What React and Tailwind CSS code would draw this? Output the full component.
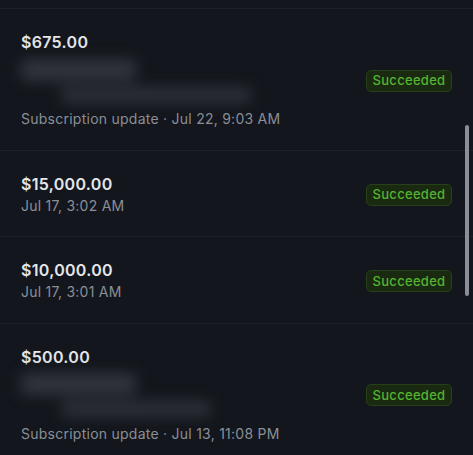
import React from 'react';

const payments = [
  {
    id: 1,
    amount: '$675.00',
    redacted: [115, 230],
    subtitle: 'Subscription update · Jul 22, 9:03 AM',
  },
  { id: 2, amount: '$15,000.00', subtitle: 'Jul 17, 3:02 AM' },
  { id: 3, amount: '$10,000.00', subtitle: 'Jul 17, 3:01 AM' },
  {
    id: 4,
    amount: '$500.00',
    redacted: [115, 190],
    subtitle: 'Subscription update · Jul 13, 11:08 PM',
  },
];

function Badge() {
  return (
    <span className="inline-flex h-[22px] w-[86px] items-center justify-center rounded-[5px] border border-[#27401a] bg-[#192a11] text-[13px] font-medium leading-none tracking-[0.3px] text-[#55b331]">
      Succeeded
    </span>
  );
}

function Redacted({ widths }) {
  // blurred customer details
  return (
    <div className="relative h-[55px]">
      <div className="absolute inset-0 flex flex-col justify-center gap-[6px] blur-[7px]">
        <div
          className="h-[22px] rounded bg-[#30343b]"
          style={{ width: widths[0] }}
        />
        <div
          className="ml-[40px] h-[16px] rounded bg-[#2c3037]"
          style={{ width: widths[1] - 40 }}
        />
      </div>
    </div>
  );
}

export default function App() {
  return (
    <div
      className="relative h-[455px] w-[473px] overflow-hidden bg-[#13161c]"
      style={{ fontFamily: 'Inter, "Noto Sans", sans-serif' }}
    >
      <div className="h-[8px]" />
      {payments.map((p) => (
        <div
          key={p.id}
          className="flex items-center justify-between border-t border-[#1d2027] pl-[21px] pr-[21px] pt-[22px] pb-[19.5px]"
        >
          <div className="flex flex-col">
            <span className="text-[16px] font-semibold leading-[22px] tracking-[0.3px] text-[#e4e6ea]">
              {p.amount}
            </span>
            {p.redacted && <Redacted widths={p.redacted} />}
            <span className="text-[14px] leading-[22px] tracking-[0.25px] text-[#8a8f98]">
              {p.subtitle}
            </span>
          </div>
          <Badge />
        </div>
      ))}

      {/* scrollbar thumb */}
      <div className="absolute left-[465px] top-[125px] h-[171px] w-[4px] rounded-full bg-[#8b8e94]" />
    </div>
  );
}
